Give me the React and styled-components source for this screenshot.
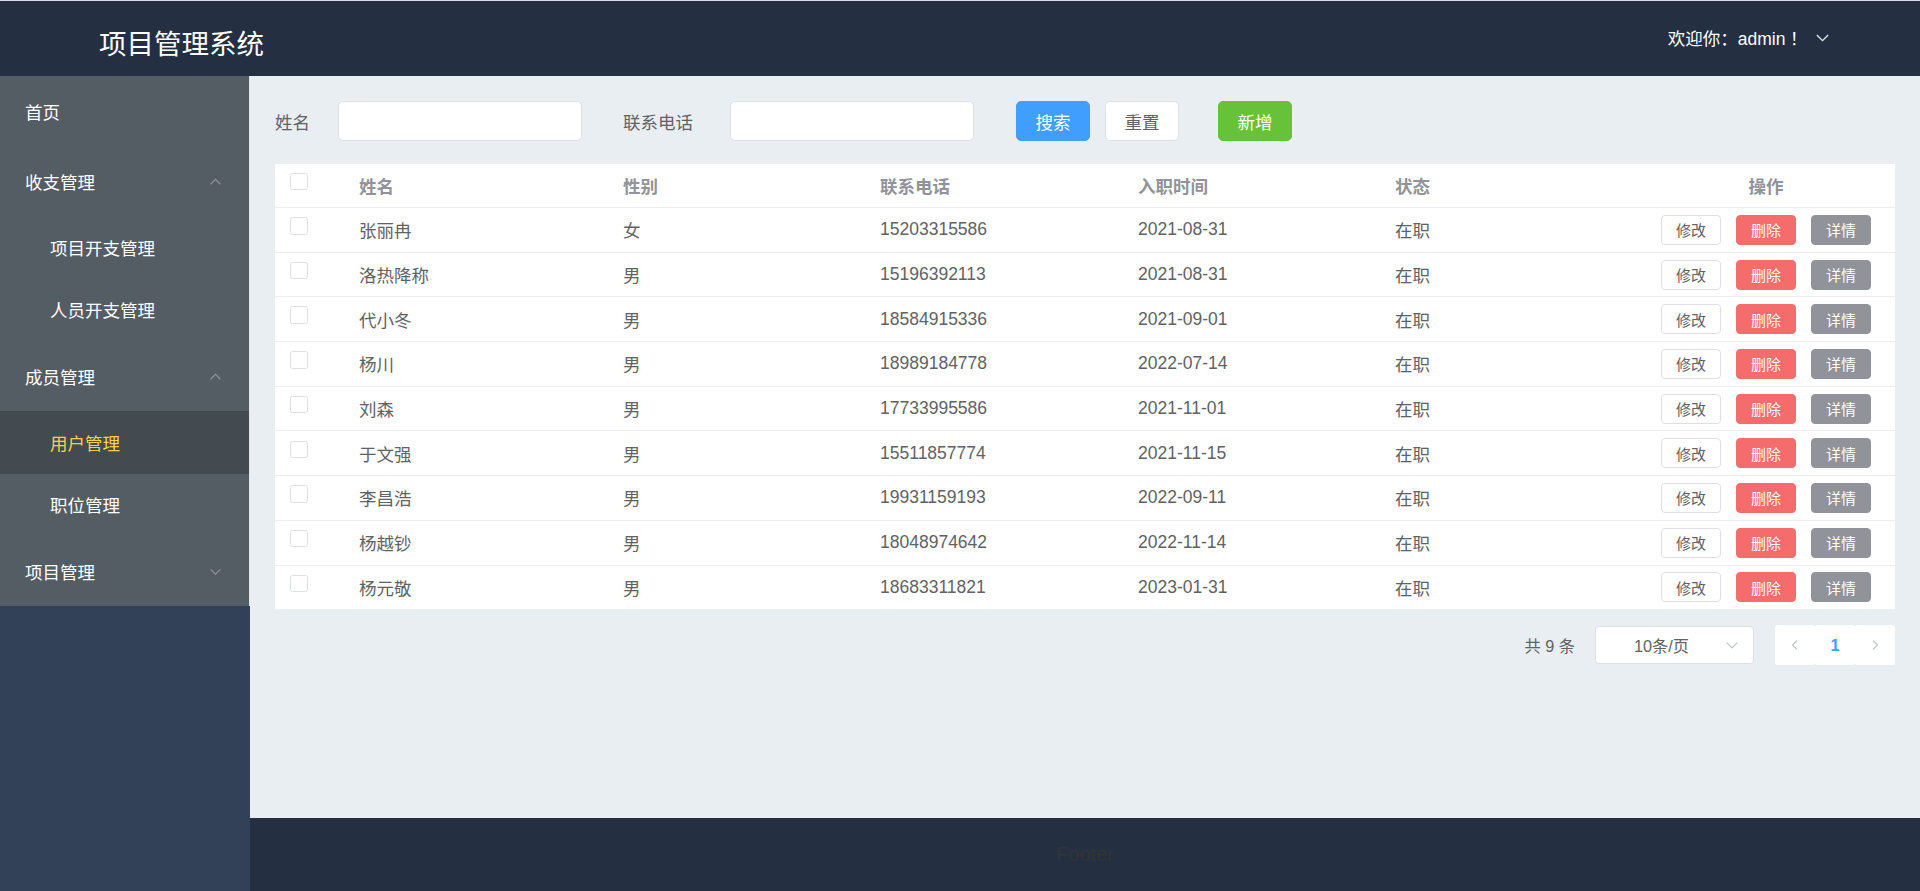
import React from "react";
import styled, { createGlobalStyle } from "styled-components";

const GlobalStyle = createGlobalStyle`
  html, body {
    margin: 0;
    padding: 0;
    height: 100%;
  }
  body {
    font-family: "Liberation Sans", "Noto Sans CJK SC", sans-serif;
    background: #fff;
  }
  * {
    box-sizing: border-box;
  }
`;

const rows = [
  { name: "张丽冉", sex: "女", phone: "15203315586", date: "2021-08-31" },
  { name: "洛热降称", sex: "男", phone: "15196392113", date: "2021-08-31" },
  { name: "代小冬", sex: "男", phone: "18584915336", date: "2021-09-01" },
  { name: "杨川", sex: "男", phone: "18989184778", date: "2022-07-14" },
  { name: "刘森", sex: "男", phone: "17733995586", date: "2021-11-01" },
  { name: "于文强", sex: "男", phone: "15511857774", date: "2021-11-15" },
  { name: "李昌浩", sex: "男", phone: "19931159193", date: "2022-09-11" },
  { name: "杨越钞", sex: "男", phone: "18048974642", date: "2022-11-14" },
  { name: "杨元敬", sex: "男", phone: "18683311821", date: "2023-01-31" },
];

function Chevron({ up, color = "#909399", size = 13 }) {
  return (
    <svg width={size} height={size} viewBox="0 0 12 12" fill="none">
      {up ? (
        <path d="M1.5 8.5 L6 4 L10.5 8.5" stroke={color} strokeWidth="1.1" />
      ) : (
        <path d="M1.5 4 L6 8.5 L10.5 4" stroke={color} strokeWidth="1.1" />
      )}
    </svg>
  );
}

function SideArrow({ left }) {
  return (
    <svg width="10" height="12" viewBox="0 0 10 12" fill="none">
      {left ? (
        <path d="M7 1.5 L2.5 6 L7 10.5" stroke="#c0c4cc" strokeWidth="1.1" />
      ) : (
        <path d="M3 1.5 L7.5 6 L3 10.5" stroke="#c0c4cc" strokeWidth="1.1" />
      )}
    </svg>
  );
}

function App() {
  return (
    <Page>
      <GlobalStyle />
      <Header>
        <Title>项目管理系统</Title>
        <UserBox>
          <span>
            欢迎你：admin<Bang>！</Bang>
          </span>
          <Chevron color="#e5e7eb" size={15} />
        </UserBox>
      </Header>
      <Body>
        <Aside>
          <Menu>
            <MenuItem>首页</MenuItem>
            <MenuItem>
              收支管理
              <Chevron up />
            </MenuItem>
            <SubItem>项目开支管理</SubItem>
            <SubItem>人员开支管理</SubItem>
            <MenuItem>
              成员管理
              <Chevron up />
            </MenuItem>
            <SubItem $active>用户管理</SubItem>
            <SubItem>职位管理</SubItem>
            <MenuItem>
              项目管理
              <Chevron />
            </MenuItem>
          </Menu>
        </Aside>
        <MainColumn>
          <Content>
            <SearchBar>
              <Label $w={63}>姓名</Label>
              <Input />
              <Label $w={107} $ml={41}>联系电话</Label>
              <Input />
              <Button $kind="primary" $ml={42}>搜索</Button>
              <Button $ml={15}>重置</Button>
              <Button $kind="success" $ml={39}>新增</Button>
            </SearchBar>

            <Table>
              <HeadRow>
                <Cell><Checkbox /></Cell>
                <Cell>姓名</Cell>
                <Cell>性别</Cell>
                <Cell>联系电话</Cell>
                <Cell>入职时间</Cell>
                <Cell>状态</Cell>
                <Cell $center>操作</Cell>
              </HeadRow>
              {rows.map((r) => (
                <Row key={r.phone}>
                  <Cell><Checkbox /></Cell>
                  <Cell>{r.name}</Cell>
                  <Cell>{r.sex}</Cell>
                  <Cell>{r.phone}</Cell>
                  <Cell>{r.date}</Cell>
                  <Cell>在职</Cell>
                  <Cell $center>
                    <Actions>
                      <SmallButton>修改</SmallButton>
                      <SmallButton $kind="danger">删除</SmallButton>
                      <SmallButton $kind="info">详情</SmallButton>
                    </Actions>
                  </Cell>
                </Row>
              ))}
            </Table>

            <Pagination>
              <Total>共 9 条</Total>
              <SizeSelect>
                <span>10条/页</span>
                <SelectArrow>
                  <Chevron color="#c0c4cc" size={14} />
                </SelectArrow>
              </SizeSelect>
              <Pager>
                <PageBtn><SideArrow left /></PageBtn>
                <PageBtn $active>1</PageBtn>
                <PageBtn><SideArrow /></PageBtn>
              </Pager>
            </Pagination>
          </Content>
          <Footer>Footer</Footer>
        </MainColumn>
      </Body>
    </Page>
  );
}

const Page = styled.div`
  display: flex;
  flex-direction: column;
  height: 891px;
  border-top: 1px solid #d9dbe0;
`;

const Header = styled.header`
  height: 75px;
  flex-shrink: 0;
  background: #242f42;
  display: flex;
  align-items: center;
  justify-content: space-between;
  padding: 0 90px 0 99px;
  color: #fff;
`;

const Title = styled.div`
  font-size: 27.5px;
  line-height: 1;
  margin-top: 9px;
  font-family: "Noto Sans CJK SC", sans-serif;
`;

const UserBox = styled.div`
  display: flex;
  align-items: center;
  gap: 12px;
  font-size: 17.5px;
  margin-top: -3px;
  font-family: "Liberation Sans", "Noto Sans CJK SC", sans-serif;
`;

const Bang = styled.span`
  font-family: "Noto Sans CJK TC", sans-serif;
`;

const Body = styled.div`
  flex: 1;
  display: flex;
  min-height: 0;
`;

const Aside = styled.aside`
  width: 250px;
  flex-shrink: 0;
  background: #324157;
`;

const Menu = styled.nav`
  background: #545c64;
  border-right: 1px solid #e6e6e6;
  display: flex;
  flex-direction: column;
`;

const MenuItem = styled.div`
  height: 70px;
  display: flex;
  align-items: center;
  justify-content: space-between;
  padding: 0 27px 0 25px;
  color: #fff;
  font-size: 17.5px;
  font-family: "Noto Sans CJK SC", sans-serif;
`;

const SubItem = styled.div`
  height: 62.5px;
  display: flex;
  align-items: center;
  padding-left: 50px;
  font-size: 17.5px;
  font-family: "Noto Sans CJK SC", sans-serif;
  color: ${(p) => (p.$active ? "#ffd04b" : "#fff")};
  background: ${(p) => (p.$active ? "#434a50" : "transparent")};
`;

const MainColumn = styled.div`
  flex: 1;
  display: flex;
  flex-direction: column;
  min-width: 0;
`;

const Content = styled.main`
  flex: 1;
  background: #e9eef3;
  padding: 25px 25px 0 25px;
  color: #606266;
`;

const SearchBar = styled.div`
  display: flex;
  align-items: center;
  height: 40px;
  margin-bottom: 23px;
`;

const Label = styled.label`
  width: ${(p) => p.$w}px;
  margin-left: ${(p) => p.$ml || 0}px;
  font-size: 17.5px;
  color: #606266;
  font-family: "Noto Sans CJK SC", sans-serif;
`;

const Input = styled.div`
  width: 244px;
  height: 40px;
  background: #fff;
  border: 1px solid #dcdfe6;
  border-radius: 5px;
`;

const buttonColors = {
  primary: { bg: "#409eff", border: "#409eff", color: "#fff" },
  success: { bg: "#67c23a", border: "#67c23a", color: "#fff" },
  danger: { bg: "#f56c6c", border: "#f56c6c", color: "#fff" },
  info: { bg: "#909399", border: "#909399", color: "#fff" },
  plain: { bg: "#fff", border: "#dcdfe6", color: "#606266" },
};

const Button = styled.button`
  width: 74px;
  height: 40px;
  margin-left: ${(p) => p.$ml || 0}px;
  border-radius: 5px;
  font-size: 17.5px;
  font-family: "Noto Sans CJK SC", sans-serif;
  border: 1px solid ${(p) => buttonColors[p.$kind || "plain"].border};
  background: ${(p) => buttonColors[p.$kind || "plain"].bg};
  color: ${(p) => buttonColors[p.$kind || "plain"].color};
  padding: 0;
  display: flex;
  align-items: center;
  justify-content: center;
`;

const Table = styled.div`
  background: #fff;
  font-size: 17.5px;
`;

const columns = "84px 264px 257px 258px 257px 242px 1fr";

const HeadRow = styled.div`
  display: grid;
  grid-template-columns: ${columns};
  height: 44px;
  border-bottom: 1px solid #ebeef5;
  color: #909399;
  font-weight: bold;
`;

const Row = styled.div`
  display: grid;
  grid-template-columns: ${columns};
  height: 44.7px;
  border-bottom: 1px solid #ebeef5;
  color: #606266;
`;

const Cell = styled.div`
  display: flex;
  align-items: center;
  justify-content: ${(p) => (p.$center ? "center" : "flex-start")};
  font-family: "Liberation Sans", "Noto Sans CJK SC", sans-serif;
  &:first-child {
    padding-left: 15px;
  }
`;

const Checkbox = styled.span`
  width: 17.5px;
  height: 17.5px;
  border: 1px solid #dcdfe6;
  border-radius: 2.5px;
  background: #fff;
  margin-bottom: 8px;
`;

const Actions = styled.div`
  display: flex;
  gap: 15px;
`;

const SmallButton = styled.button`
  width: 60px;
  height: 30px;
  padding: 0;
  border-radius: 4px;
  font-size: 15px;
  font-family: "Noto Sans CJK SC", sans-serif;
  border: 1px solid ${(p) => buttonColors[p.$kind || "plain"].border};
  background: ${(p) => buttonColors[p.$kind || "plain"].bg};
  color: ${(p) => buttonColors[p.$kind || "plain"].color};
  display: flex;
  align-items: center;
  justify-content: center;
`;

const Pagination = styled.div`
  display: flex;
  justify-content: flex-end;
  align-items: center;
  margin-top: 15px;
  height: 40px;
`;

const Total = styled.span`
  font-size: 16.25px;
  color: #606266;
  margin-right: 20px;
  font-family: "Liberation Sans", "Noto Sans CJK SC", sans-serif;
`;

const SizeSelect = styled.div`
  position: relative;
  width: 159px;
  height: 38px;
  background: #fff;
  border: 1px solid #dcdfe6;
  border-radius: 4px;
  display: flex;
  align-items: center;
  justify-content: center;
  padding-right: 26px;
  font-size: 16.25px;
  color: #606266;
  margin-right: 21px;
  font-family: "Liberation Sans", "Noto Sans CJK SC", sans-serif;
`;

const SelectArrow = styled.span`
  position: absolute;
  right: 14px;
  top: 11px;
  display: flex;
`;

const Pager = styled.div`
  display: flex;
`;

const PageBtn = styled.div`
  width: 40px;
  height: 40px;
  background: #fff;
  border-radius: 2.5px;
  display: flex;
  align-items: center;
  justify-content: center;
  font-size: 16.25px;
  font-weight: bold;
  color: ${(p) => (p.$active ? "#409eff" : "#c0c4cc")};
  font-family: "Liberation Sans", sans-serif;
`;

const Footer = styled.footer`
  height: 73px;
  flex-shrink: 0;
  background: #242f42;
  color: #333;
  display: flex;
  align-items: center;
  justify-content: center;
  font-size: 20px;
  font-family: "Liberation Sans", sans-serif;
`;

export default App;
